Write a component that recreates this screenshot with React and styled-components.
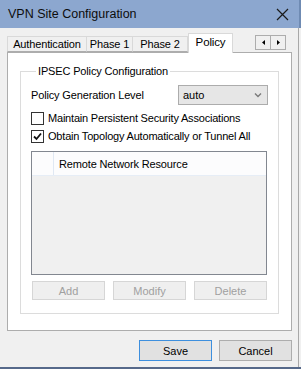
import React, {useState} from 'react';
import styled, {createGlobalStyle} from 'styled-components';

const GlobalStyle = createGlobalStyle`
html, body {
  margin: 0;
  padding: 0;
  background: #f0f0f0;
}
body {
  font-family: "Liberation Sans", Arial, sans-serif;
  font-size: 11px;
  color: #000;
}`;

const Frame = styled("div")`
width: 301px;
height: 369px;
box-sizing: border-box;
display: flex;
flex-direction: column;
background: #f0f0f0;
border-bottom: 2px solid #56698a;
overflow: hidden;`;

const TitleBar = styled("div")`
height: 28px;
flex: none;
display: flex;
align-items: center;
justify-content: space-between;
padding: 0 10px 0 8px;
background: #8ca7cf;
border-right: 2px solid #6f8bb3;
font-size: 12.5px;
color: #0d0d0d;`;

const Body = styled("div")`
flex: 1;
display: flex;
flex-direction: column;
padding: 5px 6px 0 7px;
margin-right: 2px;
border-right: 1px solid #a8a8a8;`;

const TabRow = styled("div")`
display: flex;
align-items: flex-end;
height: 19px;
position: relative;
z-index: 1;
padding-right: 6px;`;

const Tab = styled("div")`
box-sizing: border-box;
width: ${p => p.$w}px;
height: ${p => p.$active ? '20px' : '16px'};
margin-bottom: ${p => p.$active ? '-1px' : '0'};
display: flex;
justify-content: center;
align-items: ${p => p.$active ? 'flex-start' : 'center'};
padding-top: ${p => p.$active ? '2px' : '0'};
border: 1px solid #d9d9d9;
border-bottom: ${p => p.$active ? 'none' : '1px solid #adadad'};
border-left: ${p => p.$first || p.$active ? '1px solid #d9d9d9' : 'none'};
background: ${p => p.$active ? '#ffffff' : '#f0f0f0'};
font-size: ${p => p.$active ? '11.5px' : '11px'};
letter-spacing: -0.15px;
white-space: nowrap;`;

const Spacer = styled("div")`
flex: 1;`;

const ArrowBtn = styled("div")`
box-sizing: border-box;
width: 16px;
height: 15px;
margin-bottom: 2px;
border: 1px solid #adadad;
background: #f0f0f0;
display: flex;
align-items: center;
justify-content: center;
& + & { border-left: none; width: 15px; }`;

const Panel = styled("div")`
box-sizing: border-box;
width: 285px;
height: 279px;
border: 1px solid #adadad;
background: #fff;
padding: 12px 12px 0 12px;`;

const Group = styled("fieldset")`
margin: 0;
box-sizing: border-box;
width: 259px;
height: 249px;
border: 1px solid #dcdcdc;
padding: 7px 10px 0 10px;
display: flex;
flex-direction: column;`;

const Legend = styled("legend")`
padding: 0 2px;
margin-left: 5px;
font-size: 11px;
letter-spacing: -0.15px;
line-height: 13px;`;

const Row = styled("div")`
display: flex;
align-items: center;
justify-content: space-between;
height: ${p => p.$h || 18}px;
margin-bottom: 4px;`;

const Label = styled("span")`
font-size: 11px;
letter-spacing: -0.15px;`;

const Select = styled("div")`
box-sizing: border-box;
width: 90px;
height: 20px;
border: 1px solid #acacac;
background: #e6e6e6;
display: flex;
align-items: center;
justify-content: space-between;
padding: 0 5px 0 4px;
font-size: 11px;`;

const CheckRow = styled("label")`
display: flex;
align-items: center;
gap: 4px;
height: 18px;
font-size: 11px;
letter-spacing: -0.2px;
cursor: pointer;`;

const Box = styled("span")`
box-sizing: border-box;
width: 13px;
height: 13px;
border: 1px solid #333;
background: #fff;
display: flex;
align-items: center;
justify-content: center;`;

const List = styled("div")`
box-sizing: border-box;
margin-top: 6px;
width: 236px;
height: 124px;
border: 1px solid #828790;
background: #f0f0f0;`;

const ListHeader = styled("div")`
height: 23px;
display: flex;
background: #fcfcfd;
border-bottom: 1px solid #e6edf6;`;

const HeadCell = styled("div")`
display: flex;
align-items: center;
width: ${p => p.$w ? p.$w + 'px' : 'auto'};
flex: ${p => p.$w ? 'none' : 1};
border-right: ${p => p.$w ? '1px solid #e0e8f3' : 'none'};
padding-left: ${p => p.$w ? 0 : 5}px;
font-size: 11px;
letter-spacing: -0.15px;`;

const BtnRow = styled("div")`
display: flex;
gap: 8px;
margin-top: 6px;
padding-left: 1px;`;

const Button = styled("button")`
box-sizing: border-box;
width: 73px;
height: ${p => p.$h || 19}px;
padding: 0;
font-family: inherit;
font-size: 11px;
background: ${p => p.disabled ? '#efefef' : '#e1e1e1'};
color: ${p => p.disabled ? '#a0a0a0' : '#000'};
border: 1px solid ${p => p.disabled ? '#d6d6d6' : p.$focus ? '#3d8fde' : '#adadad'};`;

const Footer = styled("div")`
display: flex;
justify-content: flex-end;
gap: 7px;
padding-top: 9px;`;

const Chevron = () => (
    <svg width="8" height="6" viewBox="0 0 8 6">
        <path d="M1 1.5 L4 4.5 L7 1.5" fill="none" stroke="#7a7a7a" strokeWidth="1.4"/>
    </svg>
);

const Check = () => (
    <svg width="9" height="9" viewBox="0 0 9 9">
        <path d="M1 4.5 L3.5 7 L8 1.5" fill="none" stroke="#111" strokeWidth="1.8"/>
    </svg>
);

const tabs = [
    {name: 'Authentication', w: 80},
    {name: 'Phase 1', w: 46},
    {name: 'Phase 2', w: 55},
    {name: 'Policy', w: 45},
];

const App = () => {
    const [active, setActive] = useState('Policy');
    const [persist, setPersist] = useState(false);
    const [topology, setTopology] = useState(true);

    return (
        <Frame>
            <GlobalStyle/>
            <TitleBar>
                <span>VPN Site Configuration</span>
                <svg width="13" height="13" viewBox="0 0 13 13">
                    <path d="M1 1 L12 12 M12 1 L1 12" stroke="#1a1a1a" strokeWidth="1.2"/>
                </svg>
            </TitleBar>
            <Body>
                <TabRow>
                    {tabs.map((t, i) => (
                        <Tab key={t.name} $w={t.w} $first={i === 0} $active={t.name === active}
                             onClick={() => setActive(t.name)}>{t.name}</Tab>
                    ))}
                    <Spacer/>
                    <ArrowBtn>
                        <svg width="3" height="5" viewBox="0 0 3 5"><path d="M3 0 L0 2.5 L3 5 Z" fill="#000"/></svg>
                    </ArrowBtn>
                    <ArrowBtn>
                        <svg width="3" height="5" viewBox="0 0 3 5"><path d="M0 0 L3 2.5 L0 5 Z" fill="#000"/></svg>
                    </ArrowBtn>
                </TabRow>
                <Panel>
                    <Group>
                        <Legend>IPSEC Policy Configuration</Legend>
                        <Row $h={20}>
                            <Label>Policy Generation Level</Label>
                            <Select>auto<Chevron/></Select>
                        </Row>
                        <CheckRow onClick={() => setPersist(!persist)}>
                            <Box>{persist && <Check/>}</Box>
                            Maintain Persistent Security Associations
                        </CheckRow>
                        <CheckRow onClick={() => setTopology(!topology)}>
                            <Box>{topology && <Check/>}</Box>
                            Obtain Topology Automatically or Tunnel All
                        </CheckRow>
                        <List>
                            <ListHeader>
                                <HeadCell $w={21}/>
                                <HeadCell>Remote Network Resource</HeadCell>
                            </ListHeader>
                        </List>
                        <BtnRow>
                            <Button disabled>Add</Button>
                            <Button disabled>Modify</Button>
                            <Button disabled>Delete</Button>
                        </BtnRow>
                    </Group>
                </Panel>
                <Footer>
                    <Button $h={21} $focus>Save</Button>
                    <Button $h={21}>Cancel</Button>
                </Footer>
            </Body>
        </Frame>
    );
};

export default App;
